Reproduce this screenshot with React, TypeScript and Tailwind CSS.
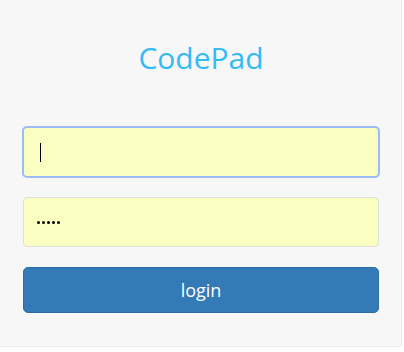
import React from "react"

export default function App() {
  return (
    <div className="min-h-[352px] w-[404px] bg-white font-['Open_Sans',sans-serif]">
      <div className="flex h-[347px] w-[402px] flex-col rounded-br-[3px] border-r border-b border-[#ececec] bg-[#f7f7f7] pr-[22px] pl-[23px]">
        <h1 className="mt-[38px] text-center text-[30px] leading-[40px] font-normal text-[#33bbf5]">
          CodePad
        </h1>

        <form className="mt-[49px] flex flex-col gap-5" onSubmit={(e) => e.preventDefault()}>
          {/* focused username field */}
          <div className="relative flex h-[50px] items-center rounded-[4px] bg-[#fafec0] pl-[17px] outline-2 outline-offset-[-1px] outline-[#9cbcf5]">
            <span className="h-[19px] w-px bg-black" />
          </div>

          <div className="flex h-[50px] items-center rounded-[4px] border border-[#dedede] bg-[#fafec0] pl-[13px]">
            <div className="flex gap-[2px]">
              {[0, 1, 2, 3, 4].map((i) => (
                <span key={i} className="size-[3px] rounded-full bg-black" />
              ))}
            </div>
          </div>

          <button
            type="submit"
            className="h-[46px] rounded-[5px] border border-[#2e6da4] bg-[#337ab7] text-[18px] text-white"
          >
            login
          </button>
        </form>
      </div>
    </div>
  )
}
